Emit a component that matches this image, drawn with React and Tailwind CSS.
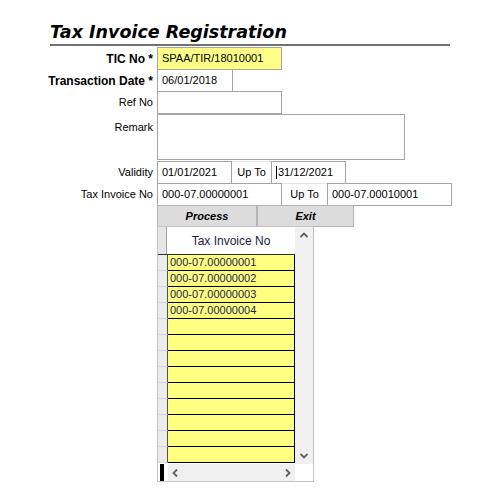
import React from 'react';

const font = { fontFamily: '"Liberation Sans", Arial, sans-serif' };

function Field({ w, value, yellow, caret, className = '' }) {
  return (
    <div
      className={`h-[23px] border border-[#a5a5a5] flex items-center pl-[4px] text-[11px] text-black ${yellow ? 'bg-[#ffff88]' : 'bg-white'} ${w} ${className}`}
    >
      {caret && <span className="inline-block w-px h-[13px] bg-black mr-px" />}
      {value}
    </div>
  );
}

function Label({ children, bold, top }) {
  return (
    <div
      className={`w-[157px] shrink-0 pr-[4px] text-right text-black ${bold ? 'font-bold text-[12px]' : 'text-[11px]'} ${top ? 'pt-[5px]' : 'h-[23px] flex items-center justify-end'}`}
    >
      {children}
    </div>
  );
}

function UpTo({ w }) {
  return (
    <div className={`h-[23px] border-y border-[#e4e4e4] flex items-center justify-center text-[11px] text-black ${w}`}>
      Up To
    </div>
  );
}

export default function App() {
  const rows = [
    '000-07.00000001',
    '000-07.00000002',
    '000-07.00000003',
    '000-07.00000004',
    '', '', '', '', '', '', '', '', '',
  ];

  return (
    <div className="w-[500px] h-[500px] bg-white relative overflow-hidden" style={font}>
      {/* Title */}
      <div className="ml-[50px] w-[400px] pt-[21px] border-b-2 border-[#707070]">
        <h1
          className="leading-[23px] font-bold italic text-black"
          style={{ fontFamily: '"DejaVu Sans", Verdana, sans-serif', fontSize: '17.5px' }}
        >
          Tax Invoice Registration
        </h1>
      </div>

      {/* Form */}
      <div className="mt-[1px] flex flex-col">
        <div className="flex">
          <Label bold>TIC No *</Label>
          <Field w="w-[125px]" value="SPAA/TIR/18010001" yellow />
        </div>
        <div className="flex -mt-px">
          <Label bold>Transaction Date *</Label>
          <Field w="w-[76px]" value="06/01/2018" />
        </div>
        <div className="flex -mt-px">
          <Label>Ref No</Label>
          <Field w="w-[125px]" value="" />
        </div>
        <div className="flex">
          <Label top>Remark</Label>
          <div className="w-[248px] h-[46px] border border-[#a5a5a5] bg-white" />
        </div>
        <div className="flex mt-[1px]">
          <Label>Validity</Label>
          <Field w="w-[75px]" value="01/01/2021" />
          <UpTo w="w-[39px]" />
          <Field w="w-[75px]" value="31/12/2021" caret />
        </div>
        <div className="flex -mt-px">
          <Label>Tax Invoice No</Label>
          <Field w="w-[125px]" value="000-07.00000001" />
          <UpTo w="w-[45px]" />
          <Field w="w-[125px]" value="000-07.00010001" />
        </div>
        <div className="flex -mt-px">
          <div className="w-[157px] shrink-0" />
          <button className="w-[100px] h-[22px] bg-[#dcdcdc] border border-[#b4b4b4] text-[11px] font-bold italic text-black">
            Process
          </button>
          <button className="w-[97px] h-[22px] bg-[#dcdcdc] border border-[#b4b4b4] text-[11px] font-bold italic text-black">
            Exit
          </button>
        </div>

        {/* Grid */}
        <div className="flex -mt-px">
          <div className="w-[157px] shrink-0" />
          <div className="w-[157px] h-[256px] border border-[#c4c4c4] bg-white flex flex-col">
            <div className="flex flex-1 min-h-0">
              {/* row indicator + cells */}
              <div className="flex flex-col w-[137px]">
                <div className="flex h-[28px] border-b border-[#303030]">
                  <div className="w-[9px] bg-[#e6e6e6] border-r border-[#a0a0a0]" />
                  <div className="flex-1 text-center pt-[5px] text-[12px] text-[#1c1c50]">
                    Tax Invoice No
                  </div>
                </div>
                {rows.map((r, i) => (
                  <div key={i} className="flex h-[16px]">
                    <div className="w-[10px] bg-[#ebebeb] border-b border-[#d8d8d8] border-r border-r-[#505050]" />
                    <div className="w-[127px] bg-[#ffff80] border-b border-black border-r flex items-center pl-[2px] text-[11px] text-[#1c1c50]">
                      {r}
                    </div>
                  </div>
                ))}
              </div>
              {/* vertical scrollbar */}
              <div className="w-[18px] bg-[#f0f0f0] flex flex-col items-center justify-between py-[4px]">
                <svg width="10" height="8" viewBox="0 0 10 8">
                  <path d="M1.5 6 L5 2.5 L8.5 6" fill="none" stroke="#606060" strokeWidth="1.8" />
                </svg>
                <svg width="10" height="8" viewBox="0 0 10 8">
                  <path d="M1.5 2 L5 5.5 L8.5 2" fill="none" stroke="#606060" strokeWidth="1.8" />
                </svg>
              </div>
            </div>
            {/* horizontal scrollbar */}
            <div className="flex h-[17px]">
              <div className="w-[2px]" />
              <div className="w-[4px] bg-black" />
              <div className="w-[4px]" />
              <div className="w-[127px] bg-[#f0f0f0] flex items-center justify-between px-[3px]">
                <svg width="8" height="10" viewBox="0 0 8 10">
                  <path d="M6 1.5 L2.5 5 L6 8.5" fill="none" stroke="#606060" strokeWidth="1.8" />
                </svg>
                <svg width="8" height="10" viewBox="0 0 8 10">
                  <path d="M2 1.5 L5.5 5 L2 8.5" fill="none" stroke="#606060" strokeWidth="1.8" />
                </svg>
              </div>
              <div className="flex-1 bg-white" />
            </div>
          </div>
        </div>
      </div>
    </div>
  );
}
